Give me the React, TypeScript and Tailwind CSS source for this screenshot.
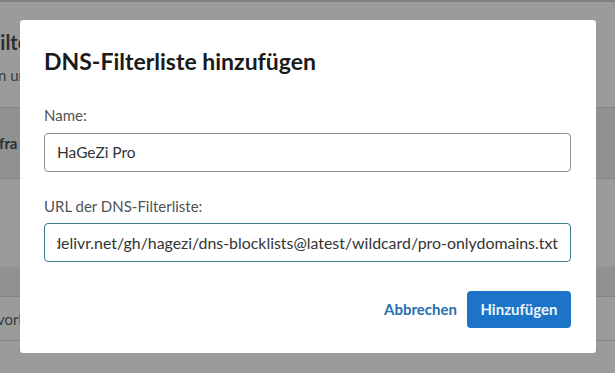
import React from "react";

const font = { fontFamily: '"Lato", "Noto Sans", sans-serif' };

export default function App() {
  const url =
    "https://cdn.jsdelivr.net/gh/hagezi/dns-blocklists@latest/wildcard/pro-onlydomains.txt";
  return (
    <div
      className="relative w-[615px] h-[373px] overflow-hidden bg-[#9a9b9b] text-[#2d2f2f]"
      style={font}
    >
      {/* dimmed page behind the dialog */}
      <div className="flex flex-col">
        <div className="h-[2px] bg-[#7f8080]" />
        <div className="h-[105px] flex flex-col pt-[27px]">
          <div className="text-[20px] font-bold leading-[26px] ml-[-11px] whitespace-nowrap">Filter</div>
          <div className="text-[15px] leading-[20px] mt-[10px] ml-[-2px] text-[#3b3d3d] whitespace-nowrap">n und</div>
        </div>
        <div className="h-[71px] border-t border-[#858787] bg-[#8f9291] flex items-center">
          <span className="text-[15px] font-bold text-[#2d2f2f] ml-[-1px] whitespace-nowrap">fra</span>
        </div>
        <div className="h-[89px] border-t border-[#858787]" />
        <div className="h-[29px] bg-[#8f9291]" />
        <div className="h-[44px] border-t border-[#858787] flex items-center pt-[2px]">
          <span className="text-[15px] text-[#3b3d3d] ml-[-3px] whitespace-nowrap">vorl</span>
        </div>
        <div className="border-t border-[#858787] flex-1" />
      </div>

      {/* dialog */}
      <div className="absolute left-[20px] top-[20px] w-[576px] h-[333px] bg-white rounded-[3px] px-[24px] pt-[26px]">
        <h2 className="text-[23px] font-bold leading-[30px] text-[#1a1a1a]">
          DNS-Filterliste hinzufügen
        </h2>
        <div className="mt-[29px] text-[15px] leading-[20px] text-[#505354]">Name:</div>
        <div className="mt-[8px] h-[39px] w-[527px] border border-[#8d8f90] rounded-[4px] flex items-center px-[12px] text-[15.5px] text-[#333]">
          HaGeZi Pro
        </div>
        <div className="mt-[24px] text-[15px] leading-[20px] text-[#505354]">URL der DNS-Filterliste:</div>
        <div className="mt-[7px] h-[39px] w-[527px] border border-[#3f7a8c] rounded-[4px] flex items-center px-[12px] text-[15.9px] text-[#333]">
          <div className="flex-1 flex justify-end overflow-hidden whitespace-nowrap">
            <span className="shrink-0">{url}</span>
          </div>
        </div>
        <div className="mt-[29px] w-[527px] flex justify-end items-center gap-[10px]">
          <span className="text-[15px] font-bold text-[#2b6fae]">Abbrechen</span>
          <div className="h-[37px] w-[104px] rounded-[4px] bg-[#1b74c8] flex items-center justify-center text-[15px] font-bold text-[#eef5fb]">
            Hinzufügen
          </div>
        </div>
      </div>
    </div>
  );
}
